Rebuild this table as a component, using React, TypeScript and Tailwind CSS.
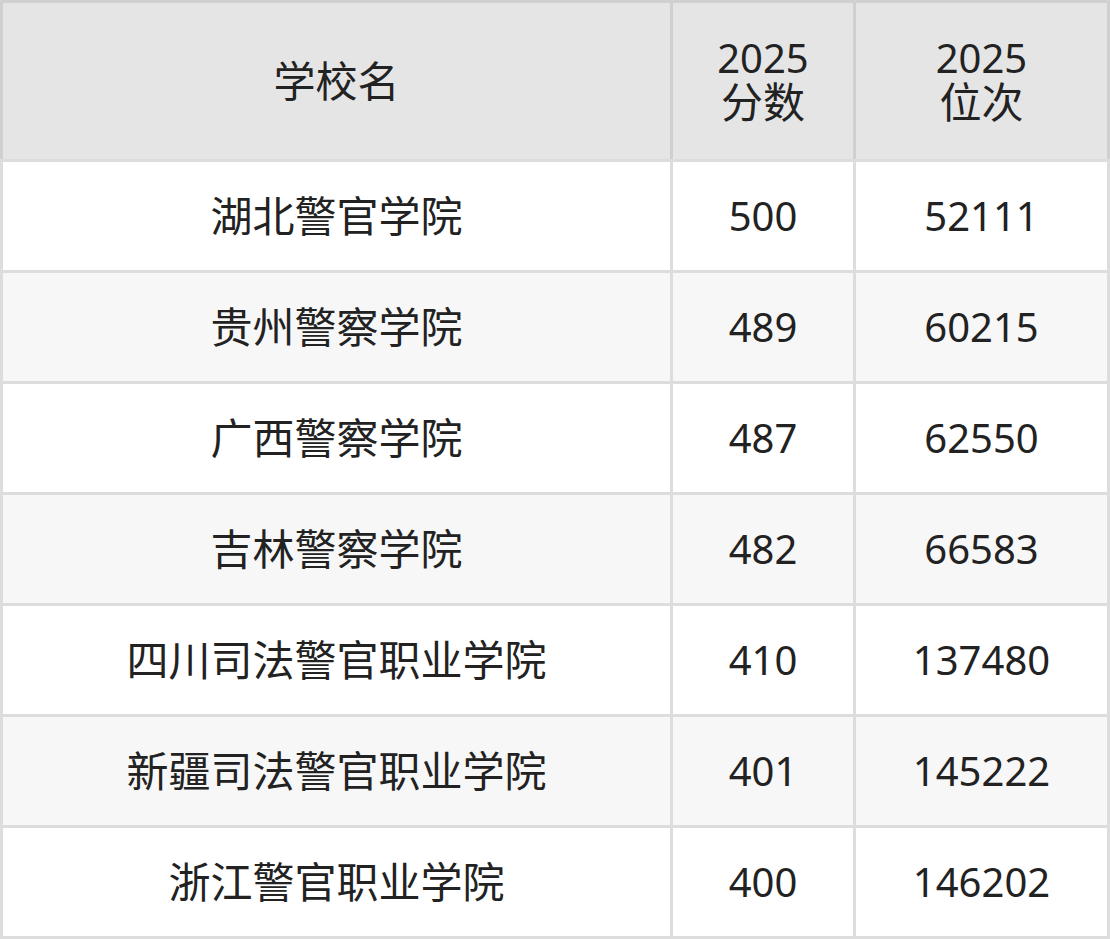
const rows = [
  { name: "湖北警官学院", score: "500", rank: "52111" },
  { name: "贵州警察学院", score: "489", rank: "60215" },
  { name: "广西警察学院", score: "487", rank: "62550" },
  { name: "吉林警察学院", score: "482", rank: "66583" },
  { name: "四川司法警官职业学院", score: "410", rank: "137480" },
  { name: "新疆司法警官职业学院", score: "401", rank: "145222" },
  { name: "浙江警官职业学院", score: "400", rank: "146202" },
];

export default function App() {
  return (
    <div
      className="w-[1110px] h-[939px] text-[#222222] text-[40px] leading-[44px]"
      style={{ fontFamily: '"Noto Sans", "Noto Sans CJK SC", sans-serif' }}
    >
      <div className="grid grid-cols-[667px_180px_251px] gap-[3px] p-[3px] pb-0 bg-[#d0d0d0]">
        <div className="h-[156px] bg-[#e5e5e5] flex items-center justify-center">
          <span className="text-[42px]">学校名</span>
        </div>
        <div className="h-[156px] bg-[#e5e5e5] flex flex-col items-center justify-center">
          <span className="leading-[42px]">2025</span>
          <span className="text-[42px] leading-[46px]">分数</span>
        </div>
        <div className="h-[156px] bg-[#e5e5e5] flex flex-col items-center justify-center">
          <span className="leading-[42px]">2025</span>
          <span className="text-[42px] leading-[46px]">位次</span>
        </div>
      </div>
      <div className="grid grid-cols-[667px_180px_251px] gap-[3px] p-[3px] bg-[#dddddd]">
        {rows.map((r, i) => {
          const bg = i % 2 === 1 ? "bg-[#f7f7f7]" : "bg-white";
          return [
            <div key={i + "a"} className={`h-[108px] flex items-center justify-center text-[42px] ${bg}`}>{r.name}</div>,
            <div key={i + "b"} className={`h-[108px] flex items-center justify-center ${bg}`}>{r.score}</div>,
            <div key={i + "c"} className={`h-[108px] flex items-center justify-center ${bg}`}>{r.rank}</div>,
          ];
        })}
      </div>
    </div>
  );
}
